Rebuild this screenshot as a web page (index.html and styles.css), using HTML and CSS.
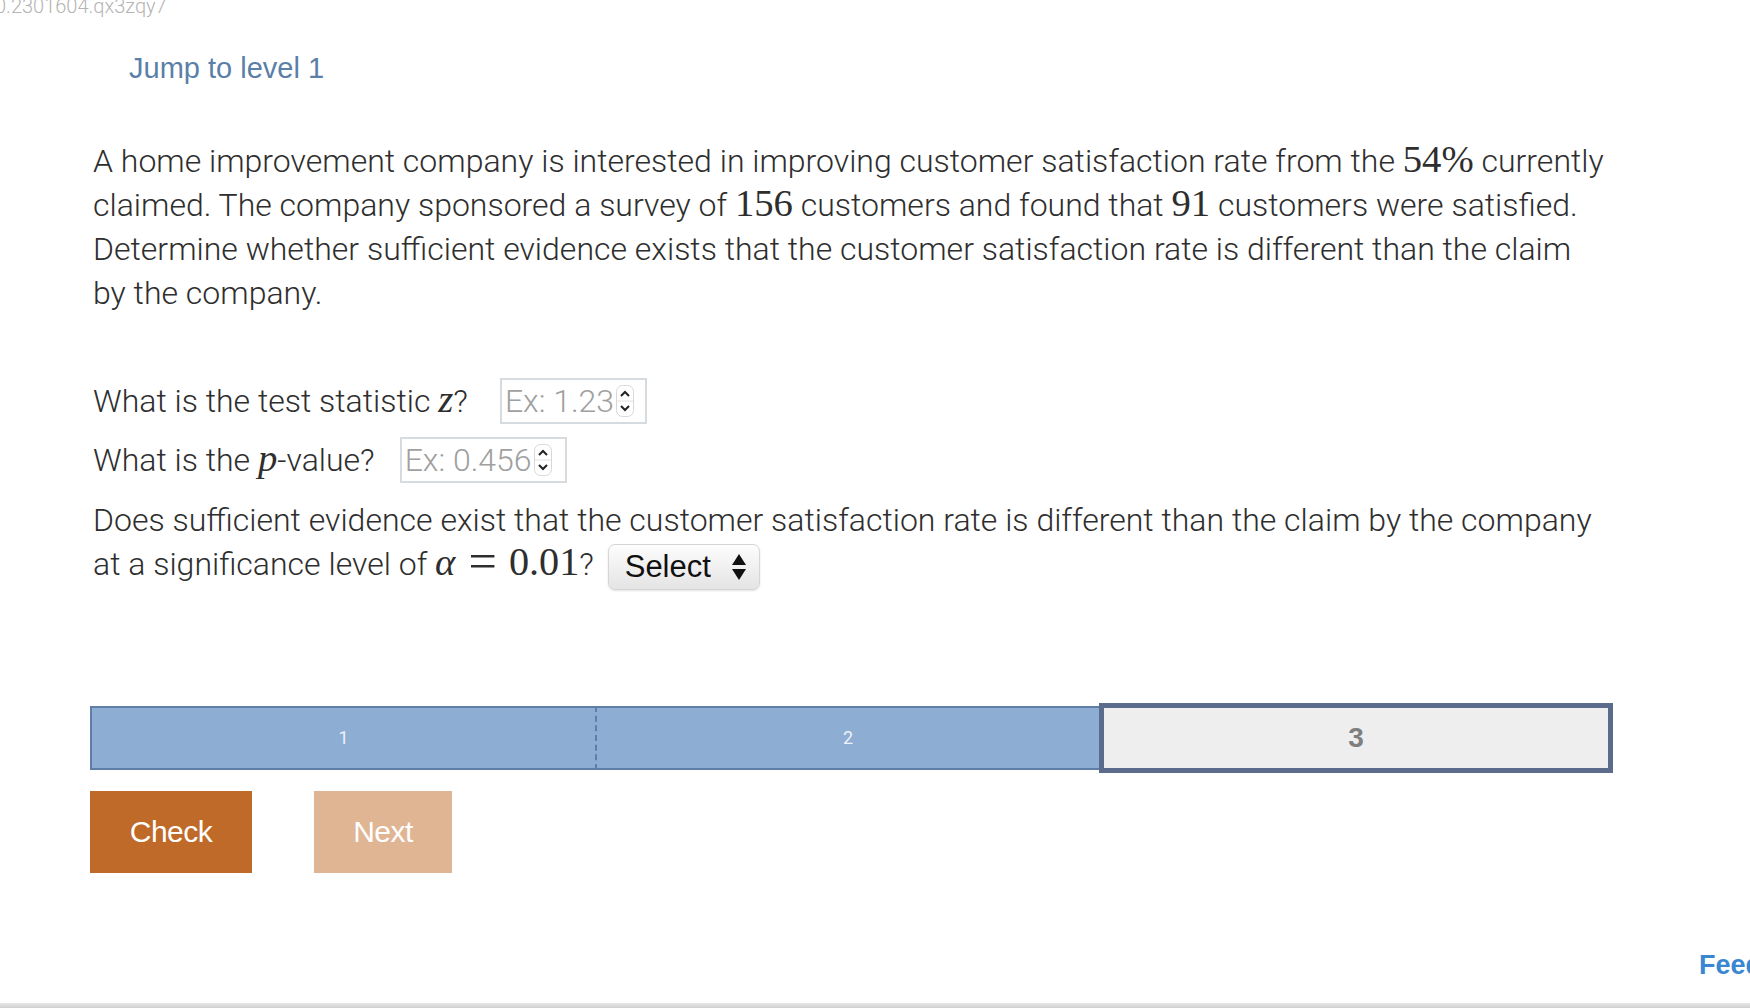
FILE: index.html
```html
<!DOCTYPE html>
<html>
<head>
<meta charset="utf-8">
<link rel="stylesheet" href="styles.css">
</head>
<body>
<div class="sid">0.2301604.qx3zqy7</div>
<div class="content">
  <div class="jump-row"><span class="jump">Jump to level 1</span></div>
  <p class="prompt">A home improvement company is interested in improving customer satisfaction rate from the <span class="m">54%</span> currently claimed. The company sponsored a survey of <span class="m">156</span> customers and found that <span class="m">91</span> customers were satisfied. Determine whether sufficient evidence exists that the customer satisfaction rate is different than the claim by the company.</p>

  <div class="q q1">
    <span class="label">What is the test statistic <span class="mi">z</span>?</span>
    <span class="numbox w1"><span class="ph">Ex: 1.23</span><span class="spin"><svg width="18" height="32" viewBox="0 0 18 32"><rect x="0.5" y="0.5" width="17" height="31" rx="6" fill="#fff" stroke="#d8d8d8"/><line x1="1" y1="16" x2="17" y2="16" stroke="#e2e2e2"/><path d="M5 11 L9 7 L13 11" fill="none" stroke="#222" stroke-width="2"/><path d="M5 21 L9 25 L13 21" fill="none" stroke="#222" stroke-width="2"/></svg></span></span>
  </div>
  <div class="q q2">
    <span class="label">What is the <span class="mi">p</span>-value?</span>
    <span class="numbox w2"><span class="ph">Ex: 0.456</span><span class="spin"><svg width="18" height="32" viewBox="0 0 18 32"><rect x="0.5" y="0.5" width="17" height="31" rx="6" fill="#fff" stroke="#d8d8d8"/><line x1="1" y1="16" x2="17" y2="16" stroke="#e2e2e2"/><path d="M5 11 L9 7 L13 11" fill="none" stroke="#222" stroke-width="2"/><path d="M5 21 L9 25 L13 21" fill="none" stroke="#222" stroke-width="2"/></svg></span></span>
  </div>
  <p class="q3">Does sufficient evidence exist that the customer satisfaction rate is different than the claim by the company at a significance level of <span class="m"><span class="mi">α</span><span class="eq">=</span><span class="num">0.01</span></span>? <span class="select"><span class="sel-text">Select</span><svg width="16" height="28" viewBox="0 0 16 28"><path d="M8 1 L15 12 L1 12 Z" fill="#111"/><path d="M8 27 L15 16 L1 16 Z" fill="#111"/></svg></span></p>

  <div class="progress">
    <div class="seg done first">1</div>
    <div class="seg done second">2</div>
    <div class="seg current">3</div>
  </div>

  <div class="buttons">
    <div class="btn check">Check</div>
    <div class="btn next">Next</div>
  </div>
</div>
<div class="feed">Feedback?</div>
<div class="bottom-line"></div>
</body>
</html>
```
FILE: styles.css
```css
html, body {
  margin: 0;
  padding: 0;
  background: #fff;
  overflow: hidden;
}
body {
  width: 1750px;
  height: 1008px;
  position: relative;
  font-family: Roboto, "Liberation Sans", sans-serif;
}
.sid {
  height: 16px;
  line-height: 16px;
  font-size: 20px;
  font-weight: 300;
  color: #b4b4b4;
  margin-top: -2px;
  margin-left: -5px;
  margin-bottom: 2px;
  white-space: nowrap;
}
.content {
  margin-left: 90px;
  width: 1523px;
}
.jump-row {
  margin-top: 34px;
  height: 40px;
  line-height: 40px;
}
.jump {
  margin-left: 39px;
  font-family: "Liberation Sans", Arial, sans-serif;
  font-size: 29px;
  color: #5b7fa8;
}
.prompt {
  margin: 51px 0 0 0;
  padding-left: 3px;
  width: 1516px;
  font-size: 32px;
  font-weight: 300;
  line-height: 44px;
  color: #2e2e2e;
}
.m {
  font-family: "Liberation Serif", "DejaVu Serif", serif;
  font-weight: 400;
  font-size: 1.21em;
  line-height: 0;
}
.mi {
  font-family: "Liberation Serif", "DejaVu Serif", serif;
  font-weight: 400;
  font-style: italic;
  font-size: 1.21em;
  line-height: 0;
}
.m .mi {
  font-size: 1em;
}
.eq {
  font-size: 1.3em;
  padding: 0 0.24em 0 0.26em;
  vertical-align: -3px;
}
.num {
  font-size: 1.04em;
}
.q {
  display: flex;
  align-items: center;
  padding-left: 3px;
  font-size: 32px;
  font-weight: 300;
  color: #2e2e2e;
  height: 46px;
}
.q1 { margin-top: 63px; }
.q2 { margin-top: 13px; }
.q1 .numbox { margin-left: 32px; }
.q2 .numbox { margin-left: 25px; }
.numbox {
  box-sizing: border-box;
  height: 46px;
  border: 2px solid #d5dbdf;
  display: flex;
  align-items: center;
  padding-left: 3px;
}
.w1 { width: 147px; }
.w2 { width: 167px; }
.ph {
  color: #a0a0a0;
  font-size: 32px;
}
.spin {
  display: flex;
  margin-left: 2px;
}
.q3 {
  margin: 15px 0 0 0;
  padding-left: 3px;
  font-size: 32px;
  font-weight: 300;
  line-height: 44px;
  color: #2e2e2e;
  width: 1516px;
}
.select {
  display: inline-flex;
  align-items: center;
  box-sizing: border-box;
  width: 152px;
  height: 46px;
  margin-left: 6px;
  vertical-align: middle;
  border: 1px solid #d6d6d6;
  border-radius: 7px;
  background: linear-gradient(#fdfdfd, #e4e4e4);
  box-shadow: 0 1px 2px rgba(0,0,0,0.12);
  padding-left: 16px;
  line-height: 1;
}
.sel-text {
  font-family: "Liberation Sans", Arial, sans-serif;
  font-weight: 400;
  font-size: 31px;
  color: #111;
  margin-right: 20px;
}
.progress {
  margin-top: 116px;
  display: flex;
  height: 64px;
}
.seg {
  box-sizing: border-box;
  display: flex;
  align-items: center;
  justify-content: center;
}
.done {
  background: #8eadd2;
  border-top: 2px solid #5f7ea7;
  border-bottom: 2px solid #5f7ea7;
  color: #edf2f8;
  font-size: 18px;
}
.first {
  flex: 0 0 507px;
  border-left: 2px solid #5f7ea7;
  border-right: 2px dashed #5f7ea7;
}
.second {
  flex: 0 0 502px;
}
.current {
  flex: 0 0 514px;
  margin: -3px 0;
  background: #eeeeee;
  border: 5px solid #5b6b8b;
  font-family: "Liberation Sans", Arial, sans-serif;
  font-weight: bold;
  font-size: 28px;
  color: #7f7f7f;
}
.buttons {
  margin-top: 21px;
  display: flex;
  gap: 62px;
}
.btn {
  height: 82px;
  display: flex;
  align-items: center;
  justify-content: center;
  color: #fff;
  font-family: "Liberation Sans", Arial, sans-serif;
  font-size: 30px;
  letter-spacing: -0.5px;
}
.check {
  width: 162px;
  background: #bf6a28;
}
.next {
  width: 138px;
  background: #e0b594;
}
.feed {
  position: absolute;
  left: 1699px;
  top: 950px;
  font-family: "Liberation Sans", Arial, sans-serif;
  font-weight: bold;
  font-size: 27px;
  color: #3987d0;
  white-space: nowrap;
}
.bottom-line {
  position: absolute;
  left: 0;
  top: 1003px;
  width: 1750px;
  height: 5px;
  background: linear-gradient(#e8e8e8, #cfcfcf);
}
```
